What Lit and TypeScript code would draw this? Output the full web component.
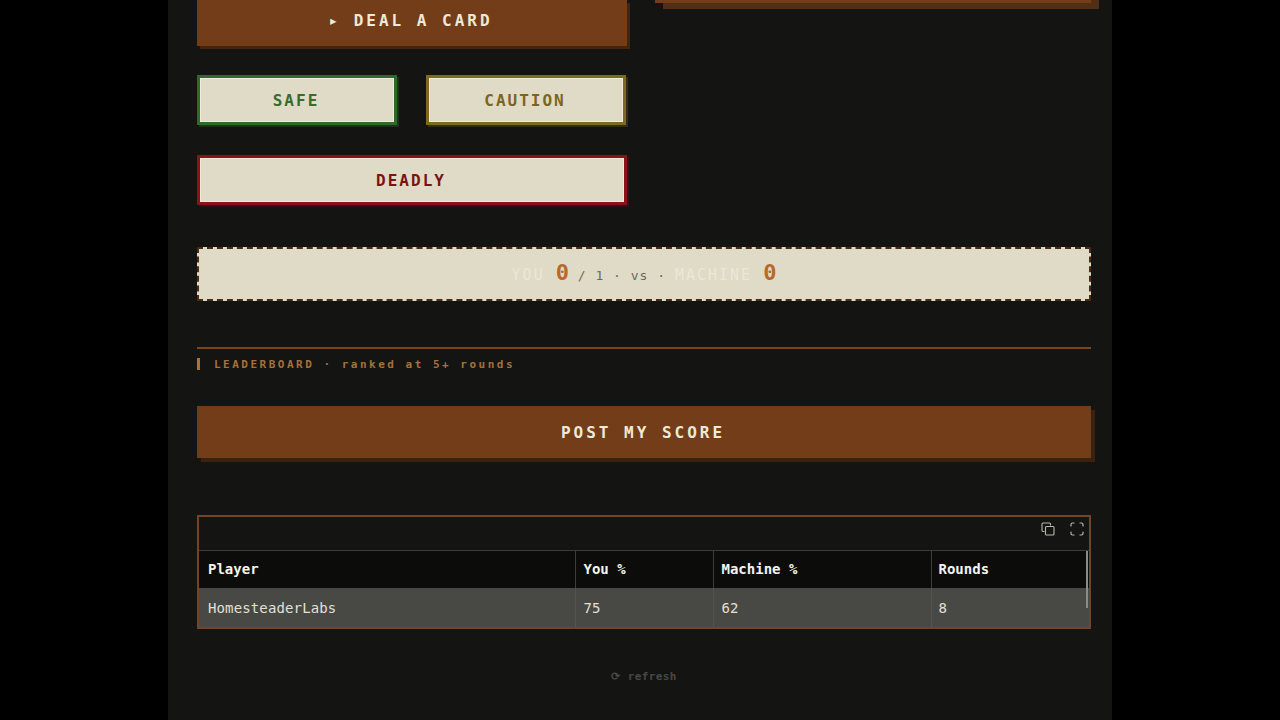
import { LitElement, html, css } from "lit";
import { customElement } from "lit/decorators.js";

@customElement("app-root")
export class AppRoot extends LitElement {
  static styles = css`
    :host {
      display: block;
      height: 720px;
      overflow: hidden;
      background: #000;
      font-family: "DejaVu Sans Mono", "Liberation Mono", monospace;
    }
    .page {
      box-sizing: border-box;
      width: 944px;
      height: 720px;
      margin: 0 auto;
      padding: 0 21px 0 29px;
      background: #141412;
      overflow: hidden;
    }
    .top {
      display: grid;
      grid-template-columns: 430px 436px;
      column-gap: 28px;
      align-items: start;
    }
    .left {
      display: flex;
      flex-direction: column;
    }
    .btn {
      box-sizing: border-box;
      display: flex;
      align-items: center;
      justify-content: center;
      font-weight: 700;
      font-size: 16px;
      white-space: pre;
      padding-right: 2px;
    }
    .deal {
      height: 46px;
      padding-bottom: 5px;
      padding-right: 3px;
      background: #733d19;
      color: #efe9d8;
      letter-spacing: 3px;
      box-shadow: 3px 3px 0 #43250f;
    }
    .pair {
      display: grid;
      grid-template-columns: 200px 200px;
      column-gap: 29px;
      margin-top: 29px;
    }
    .choice {
      height: 50px;
      background: #e0dbc6;
      letter-spacing: 2px;
      border: 3px solid;
    }
    .safe {
      color: #3a6b2a;
      border-color: #2f6a2c;
      box-shadow: 2px 2px 0 #20301c, inset 0 0 0 1px #f0ecdc;
    }
    .caution {
      color: #7a6520;
      border-color: #7d6a1f;
      box-shadow: 2px 2px 0 #332d14, inset 0 0 0 1px #f0ecdc;
    }
    .deadly {
      color: #7a1212;
      border-color: #8a1218;
      margin-top: 30px;
      box-shadow: 2px 2px 0 #301415, inset 0 0 0 1px #f0ecdc;
    }
    .panel-edge {
      height: 43px;
      margin-top: -40px;
      background: #733d19;
      box-shadow: 8px 6px 0 #522e16;
    }
    .score {
      box-sizing: border-box;
      height: 54px;
      margin-top: 42px;
      padding-bottom: 3px;
      background: #e0dbc6;
      border: 2px dashed #4a2a14;
      display: flex;
      align-items: center;
      justify-content: center;
      color: #6a6a60;
      font-size: 13px;
      letter-spacing: 1px;
    }
    .score-line { white-space: pre; }
    .who { color: #ebe7d8; font-size: 15px; letter-spacing: 2px; }
    .num { color: #b5692b; font-size: 22px; font-weight: 700; letter-spacing: 0; }
    .rule {
      height: 2px;
      margin-top: 46px;
      background: #7a4519;
    }
    .lb {
      display: flex;
      align-items: center;
      margin-top: 9px;
      height: 12px;
      border-left: 3px solid #b0702f;
      padding-left: 14px;
      color: #a5703a;
      font-size: 11px;
      font-weight: 700;
      letter-spacing: 2.5px;
      white-space: pre;
    }
    .post {
      height: 52px;
      margin-top: 36px;
      background: #733d19;
      color: #efe9d8;
      letter-spacing: 3px;
      box-shadow: 4px 4px 0 #3a2110;
    }
    .frame {
      box-sizing: border-box;
      height: 114px;
      margin-top: 57px;
      border: 2px solid #70452a;
      background: #141412;
      display: flex;
      flex-direction: column;
      position: relative;
    }
    .tools {
      height: 33px;
      display: flex;
      justify-content: flex-end;
      align-items: flex-start;
      gap: 15px;
      padding: 5px 5px 0 0;
      box-sizing: border-box;
      color: #b8b8b0;
    }
    .tools svg { display: block; }
    table {
      border-collapse: collapse;
      table-layout: fixed;
      width: 100%;
      font-size: 14px;
    }
    th, td {
      text-align: left;
      padding: 0 0 0 8px;
      box-sizing: border-box;
      overflow: hidden;
    }
    th:first-child, td:first-child { padding-left: 9px; }
    th:last-child, td:last-child { padding-left: 7px; border-right: none; }
    th {
      height: 38px;
      background: #0c0c0a;
      color: #f5f5ee;
      font-weight: 700;
      border-top: 1px solid #3c3c38;
      border-right: 1px solid #3c3c38;
    }
    td {
      height: 39px;
      background: #484844;
      color: #e0e0d6;
      letter-spacing: 0.13px;
      border-right: 1px solid #54544f;
    }
    .scroll {
      position: absolute;
      right: 1px;
      top: 34px;
      width: 2px;
      height: 57px;
      background: #8a8a86;
    }
    .refresh {
      margin-top: 41px;
      text-align: center;
      color: #484844;
      font-size: 11px;
      font-weight: 700;
      letter-spacing: 0.4px;
    }
  `;

  render() {
    return html`
      <div class="page">
        <div class="top">
          <div class="left">
            <div class="btn deal">▸ DEAL A CARD</div>
            <div class="pair">
              <div class="btn choice safe">SAFE</div>
              <div class="btn choice caution">CAUTION</div>
            </div>
            <div class="btn choice deadly">DEADLY</div>
          </div>
          <div class="panel-edge"></div>
        </div>
        <div class="score">
          <span class="score-line"><span class="who">YOU </span><span class="num">0</span> / 1 · vs · <span class="who">MACHINE </span><span class="num">0</span></span>
        </div>
        <div class="rule"></div>
        <div class="lb">LEADERBOARD · ranked at 5+ rounds</div>
        <div class="btn post">POST MY SCORE</div>
        <div class="frame">
          <div class="tools">
            <svg width="14" height="14" viewBox="0 0 14 14" fill="none" stroke="currentColor" stroke-width="1.1">
              <path d="M3.5 9.5H2A1 1 0 0 1 1 8.5V2A1 1 0 0 1 2 1H8.5A1 1 0 0 1 9.5 2V3.5"/>
              <rect x="4.5" y="4.5" width="8.5" height="8.5" rx="1"/>
            </svg>
            <svg width="14" height="14" viewBox="0 0 14 14" fill="none" stroke="currentColor" stroke-width="1.2" stroke-linecap="round">
              <path d="M1 4V2.5A1.5 1.5 0 0 1 2.5 1H4M10 1H11.5A1.5 1.5 0 0 1 13 2.5V4M13 10V11.5A1.5 1.5 0 0 1 11.5 13H10M4 13H2.5A1.5 1.5 0 0 1 1 11.5V10"/>
            </svg>
          </div>
          <table>
            <colgroup>
              <col style="width:376px" /><col style="width:138px" /><col style="width:218px" /><col />
            </colgroup>
            <tr><th>Player</th><th>You %</th><th>Machine %</th><th>Rounds</th></tr>
            <tr><td>HomesteaderLabs</td><td>75</td><td>62</td><td>8</td></tr>
          </table>
          <div class="scroll"></div>
        </div>
        <div class="refresh">⟳ refresh</div>
      </div>
    `;
  }
}
